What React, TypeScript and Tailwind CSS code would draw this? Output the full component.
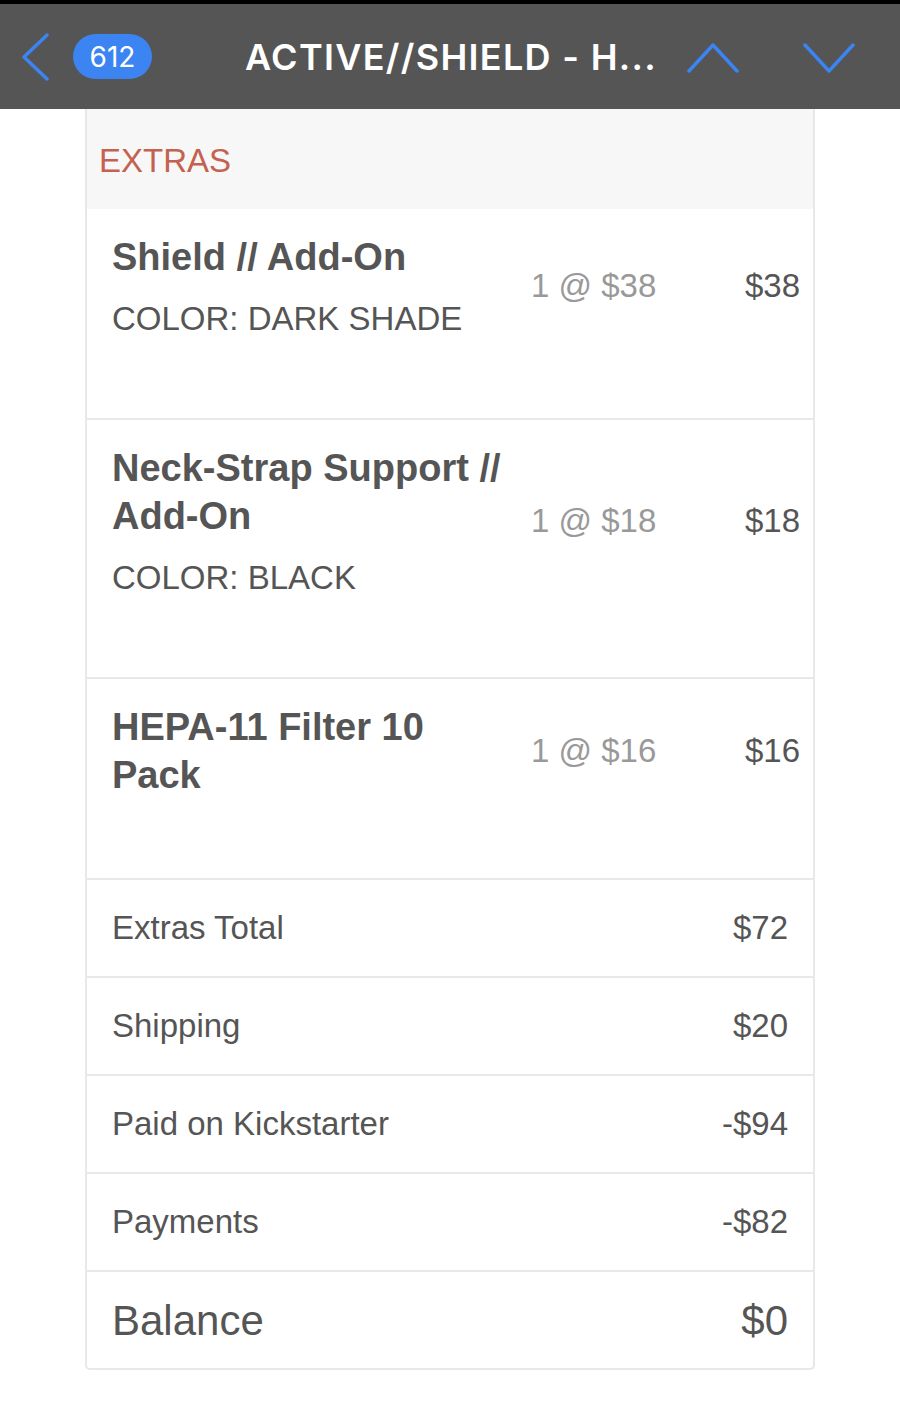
import React from "react";

const items = [
  { title: "Shield // Add-On", color: "COLOR: DARK SHADE", qty: "1 @ $38", price: "$38" },
  { title: "Neck-Strap Support // Add-On", color: "COLOR: BLACK", qty: "1 @ $18", price: "$18" },
  { title: "HEPA-11 Filter 10 Pack", color: null, qty: "1 @ $16", price: "$16" },
];

const summary = [
  { label: "Extras Total", value: "$72" },
  { label: "Shipping", value: "$20" },
  { label: "Paid on Kickstarter", value: "-$94" },
  { label: "Payments", value: "-$82" },
];

export default function App() {
  return (
    <div className="w-[900px] min-h-[1407px] bg-white" style={{ fontFamily: '"Liberation Sans", Arial, sans-serif' }}>
      {/* Header */}
      <div className="h-[109px] bg-[#555555] border-t-4 border-black flex items-center pl-[20px]">
        <svg width="30" height="48" viewBox="0 0 30 48" className="shrink-0">
          <polyline points="27,2 4,24 27,46" fill="none" stroke="#3b84f2" strokeWidth="3.5" strokeLinecap="round" strokeLinejoin="round" />
        </svg>
        <div className="ml-[23px] w-[79px] h-[45px] rounded-full bg-[#3b84f2] flex items-center justify-center text-white text-[28px] shrink-0" style={{ fontFamily: 'Inter, "Liberation Sans", sans-serif' }}>
          612
        </div>
        <div className="ml-[93px] w-[420px] shrink-0 whitespace-nowrap text-white text-[36px] font-semibold leading-none tracking-[1.3px]" style={{ fontFamily: 'Inter, "Liberation Sans", sans-serif' }}>
          ACTIVE//SHIELD - H...
        </div>
        <svg width="52" height="30" viewBox="0 0 52 30" className="ml-[22px] shrink-0 mt-[2px]">
          <polyline points="2,28 26,2 50,28" fill="none" stroke="#3b84f2" strokeWidth="3.5" strokeLinecap="round" strokeLinejoin="round" />
        </svg>
        <svg width="52" height="30" viewBox="0 0 52 30" className="ml-[64px] shrink-0 mt-[2px]">
          <polyline points="2,2 26,28 50,2" fill="none" stroke="#3b84f2" strokeWidth="3.5" strokeLinecap="round" strokeLinejoin="round" />
        </svg>
      </div>

      {/* Card */}
      <div className="w-[730px] mx-auto border-x-2 border-b-2 border-[#e8e8e8] rounded-b-[5px] text-[#555555]">
        <div className="h-[100px] bg-[#f7f7f7] flex items-center pl-[12px]">
          <span className="text-[33px] text-[#c4614f] leading-none mt-[3px]">EXTRAS</span>
        </div>

        {items.map((it) => (
          <div key={it.title} className="flex items-center pl-[25px] pr-[13px] pt-[24px] pb-[79px] border-b-2 border-[#e8e8e8]">
            <div className="w-[400px] shrink-0">
              <div className="text-[38px] leading-[48px] font-bold">{it.title}</div>
              {it.color && <div className="text-[33px] leading-[40px] mt-[18px]">{it.color}</div>}
            </div>
            <div className="ml-[19px] text-[33px] text-[#999999] whitespace-nowrap">{it.qty}</div>
            <div className="flex-1 text-right text-[33px]">{it.price}</div>
          </div>
        ))}

        {summary.map((s) => (
          <div key={s.label} className="h-[98px] flex items-center justify-between pl-[25px] pr-[25px] border-b-2 border-[#e8e8e8] text-[33px]">
            <span>{s.label}</span>
            <span>{s.value}</span>
          </div>
        ))}

        <div className="h-[96px] flex items-center justify-between pl-[25px] pr-[25px] text-[42px]">
          <span>Balance</span>
          <span>$0</span>
        </div>
      </div>
    </div>
  );
}
